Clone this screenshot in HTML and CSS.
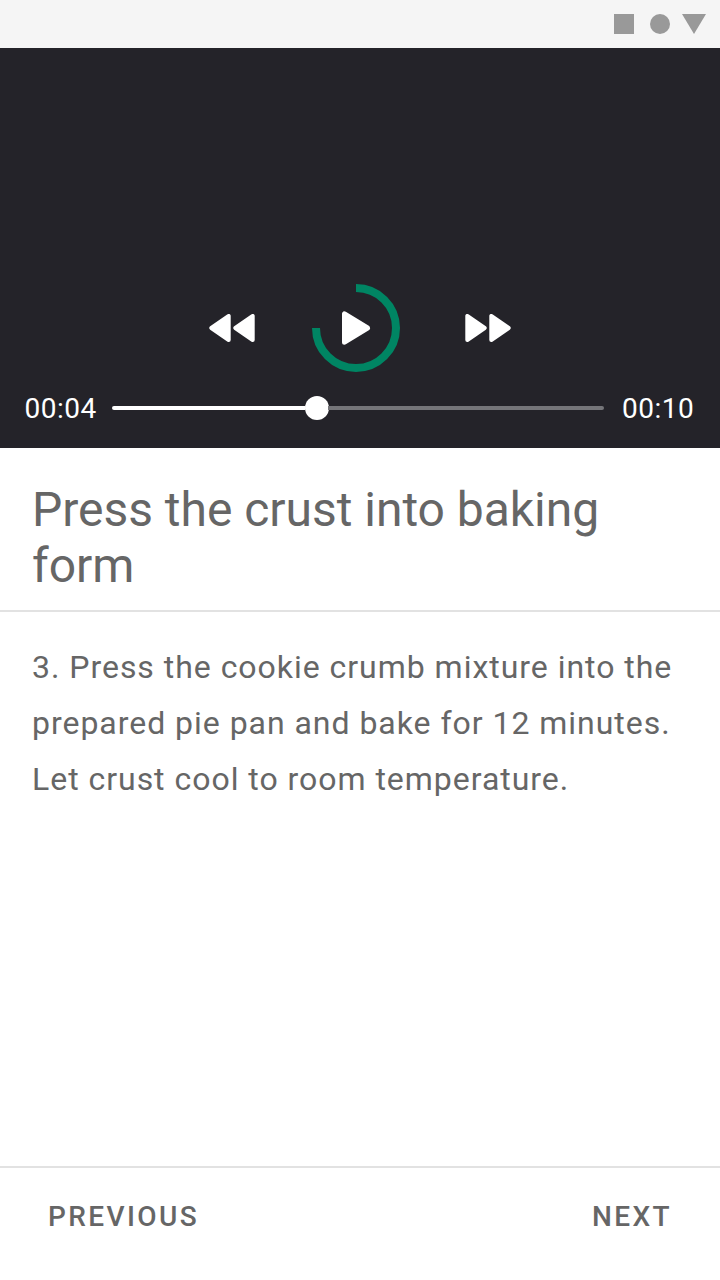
FILE: index.html
```html
<!DOCTYPE html>
<html lang="en">
<head>
<meta charset="utf-8">
<title>Recipe step</title>
<link rel="stylesheet" href="styles.css">
</head>
<body>
<div class="screen">
  <div class="status-bar">
    <svg class="status-icons" viewBox="0 0 92 20"><path d="M0 0h20v20H0z"/><circle cx="46" cy="10" r="10"/><path d="M68 0h24L80 20z"/></svg>
  </div>
  <section class="player">
    <div class="controls">
      <svg class="skip" viewBox="0 0 46 28"><path d="M19.7 2v24L2.3 14zM43.7 2v24L26.3 14z"/></svg>
      <div class="play">
        <svg class="ring" viewBox="0 0 88 88"><path class="arc" d="M44 4A40 40 0 1 1 4 44"/><path class="triangle" d="M32.5 29.8v28.4L55.5 44z"/></svg>
      </div>
      <svg class="skip" viewBox="0 0 46 28"><path d="M2.3 2v24l17.4-12zM26.3 2v24l17.4-12z"/></svg>
    </div>
    <div class="timeline">
      <span class="time">00:04</span>
      <div class="track"><div class="played"></div><div class="thumb"></div><div class="remaining"></div></div>
      <span class="time">00:10</span>
    </div>
  </section>
  <h1 class="title">Press the crust into baking form</h1>
  <p class="step">3. Press the cookie crumb mixture into the prepared pie pan and bake for 12 minutes. Let crust cool to room temperature.</p>
  <nav class="nav"><button class="nav-button">PREVIOUS</button><button class="nav-button">NEXT</button></nav>
</div>
</body>
</html>
```
FILE: styles.css
```css
* { box-sizing: border-box; }
body { margin: 0; font-family: Roboto, sans-serif; color: #666; background: #fff; -webkit-font-smoothing: antialiased; }
.screen { width: 720px; height: 1280px; display: flex; flex-direction: column; overflow: hidden; }
.status-bar { height: 48px; flex: none; background: #f5f5f5; display: flex; justify-content: flex-end; align-items: center; padding-right: 14px; }
.status-icons { width: 92px; height: 20px; fill: #999; }
.player { height: 400px; flex: none; background: #242329; color: #fff; display: flex; flex-direction: column; justify-content: flex-end; padding-bottom: 22px; }
.controls { height: 88px; display: flex; align-items: center; padding-left: 209px; }
.skip { width: 46px; height: 28px; fill: #fff; stroke: #fff; stroke-width: 4; stroke-linejoin: round; }
.play { width: 88px; height: 88px; margin: 0 65px 0 57px; }
.ring { display: block; width: 88px; height: 88px; }
.arc { fill: none; stroke: #008563; stroke-width: 8; }
.triangle { fill: #fff; stroke: #fff; stroke-width: 5; stroke-linejoin: round; }
.timeline { height: 36px; margin-top: 18px; display: flex; align-items: center; padding-left: 24.5px; }
.time { font-size: 28px; line-height: 36px; letter-spacing: 0.5px; width: 73px; padding-top: 1px; white-space: nowrap; }
.track { width: 492px; margin: 0 18px 0 14.5px; display: flex; align-items: center; }
.played { width: 193px; height: 4px; background: #fff; border-radius: 2px 0 0 2px; }
.thumb { width: 24px; height: 24px; margin: 0 -1px 0 -0.5px; border-radius: 50%; background: #fff; }
.remaining { flex: 1; height: 4px; background: #757579; border-radius: 0 2px 2px 0; }
.title { height: 164px; flex: none; margin: 0; padding: 34px 32px 0; border-bottom: 2px solid #e2e2e2; font-size: 48px; line-height: 56px; font-weight: 400; letter-spacing: -0.03px; }
.step { flex: 1; margin: 0; padding: 27px 32px 0; font-size: 32px; line-height: 56px; letter-spacing: 0.97px; }
.nav { height: 114px; flex: none; display: flex; justify-content: space-between; align-items: flex-start; padding: 31px 48px 0; border-top: 2px solid #e2e2e2; }
.nav-button { padding: 0; border: 0; background: none; color: inherit; font: 500 28px/36px Roboto, sans-serif; letter-spacing: 2.4px; }
```
